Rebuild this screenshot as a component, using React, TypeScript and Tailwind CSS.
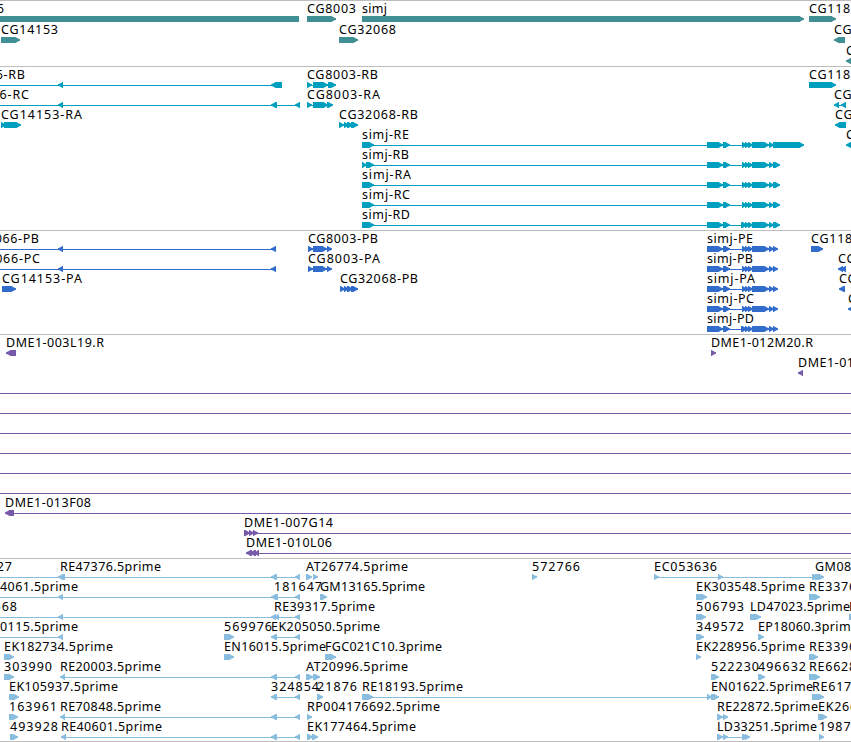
type Exon = [number, number];

interface Feature {
  name?: string;
  x: number;
  row: number;
  dir?: "fwd" | "rev";
  line?: Exon;
  exons?: Exon[];
}

interface TrackData {
  id: string;
  color: string;
  height: string;
  rowHeight: number;
  axis: number;
  features: Feature[];
}

// label advances in px, anything missing is 8
const ADVANCE: Record<string, number> = {
  A: 9, B: 7, D: 8, E: 7, F: 6, G: 9, L: 6, M: 10, N: 9, P: 7, T: 7,
  ".": 4, "-": 7, s: 6, i: 3, m: 12, j: 4, r: 5, e: 6,
};

function labelWidth(name: string) {
  return name.split("").reduce((sum, ch) => sum + (ADVANCE[ch] ?? 8), 0);
}

const SIMJ_MID: Exon[] = [[707, 723], [723, 730], [742, 747], [745, 750], [748, 753], [752, 769], [769, 774]];

const simjRna = (name: string, row: number): Feature => ({
  name,
  x: 362,
  row,
  line: [362, 773],
  exons: [
    ...(name === "simj-RB" ? ([[362, 367], [366, 374]] as Exon[]) : ([[362, 374]] as Exon[])),
    ...(name === "simj-RD" ? ([[741, 746]] as Exon[]) : []),
    ...SIMJ_MID,
    name === "simj-RE" ? [773, 804] : [773, 780],
  ],
});

const simjProtein = (name: string, row: number): Feature => ({
  name,
  x: 707,
  row,
  line: [707, 773],
  exons: [...(name === "simj-PD" ? ([[741, 746]] as Exon[]) : []), ...SIMJ_MID, [773, 778]],
});

const TRACKS: TrackData[] = [
  {
    id: "genes",
    color: "#3f8f95",
    height: "h-[66px]",
    rowHeight: 21,
    axis: 19,
    features: [
      { name: "CG12066", x: -53, row: 0, dir: "rev", exons: [[-60, 299]] },
      { name: "CG8003", x: 307, row: 0, exons: [[307, 336]] },
      { name: "simj", x: 362, row: 0, exons: [[362, 804]] },
      { name: "CG11811", x: 809, row: 0, exons: [[809, 836]] },
      { name: "CG14153", x: 1, row: 1, exons: [[1, 20]] },
      { name: "CG32068", x: 339, row: 1, exons: [[339, 358]] },
      { name: "CG6000", x: 834, row: 1, dir: "rev", exons: [[834, 845]] },
      { name: "CG6020", x: 846, row: 2, dir: "rev", exons: [[846, 870]] },
    ],
  },
  {
    id: "transcripts",
    color: "#009fbf",
    height: "h-[164px]",
    rowHeight: 20,
    axis: 19,
    features: [
      { name: "CG12066-RB", x: -54, row: 0, dir: "rev", line: [-5, 275], exons: [[58, 63], [271, 282]] },
      { name: "CG8003-RB", x: 307, row: 0, line: [307, 334], exons: [[307, 312], [313, 328], [328, 336]] },
      { name: "CG11811", x: 809, row: 0, exons: [[809, 836]] },
      { name: "CG12066-RC", x: -51, row: 1, dir: "rev", line: [-5, 298], exons: [[58, 63], [271, 277], [295, 300]] },
      { name: "CG8003-RA", x: 307, row: 1, line: [307, 330], exons: [[307, 312], [313, 328], [327, 333]] },
      { name: "CG6000", x: 834, row: 1, dir: "rev", line: [837, 844], exons: [[834, 839], [841, 846]] },
      { name: "CG14153-RA", x: 1, row: 2, line: [1, 17], exons: [[1, 6], [4, 21]] },
      { name: "CG32068-RB", x: 339, row: 2, line: [339, 355], exons: [[339, 344], [344, 349], [347, 353], [351, 358]] },
      { name: "CG6000", x: 835, row: 2, dir: "rev", exons: [[835, 846]] },
      simjRna("simj-RE", 3),
      { name: "CG6020", x: 846, row: 3, dir: "rev", exons: [[846, 870]] },
      simjRna("simj-RB", 4),
      simjRna("simj-RA", 5),
      simjRna("simj-RC", 6),
      simjRna("simj-RD", 7),
    ],
  },
  {
    id: "proteins",
    color: "#316ccc",
    height: "h-[104px]",
    rowHeight: 20,
    axis: 19,
    features: [
      { name: "CG12066-PB", x: -39, row: 0, dir: "rev", line: [-5, 273], exons: [[58, 63], [271, 276]] },
      { name: "CG8003-PB", x: 308, row: 0, line: [308, 329], exons: [[308, 313], [313, 327], [327, 332]] },
      simjProtein("simj-PE", 0),
      { name: "CG11811", x: 811, row: 0, exons: [[811, 823]] },
      { name: "CG12066-PC", x: -39, row: 1, dir: "rev", line: [-5, 273], exons: [[58, 63], [271, 276]] },
      { name: "CG8003-PA", x: 308, row: 1, line: [308, 329], exons: [[308, 313], [313, 327], [327, 332]] },
      simjProtein("simj-PB", 1),
      { name: "CG6000", x: 838, row: 1, dir: "rev", exons: [[838, 843], [841, 846]] },
      { name: "CG14153-PA", x: 2, row: 2, exons: [[2, 16]] },
      { name: "CG32068-PB", x: 340, row: 2, line: [340, 355], exons: [[340, 345], [344, 349], [347, 353], [351, 358]] },
      simjProtein("simj-PA", 2),
      { name: "CG6000", x: 839, row: 2, dir: "rev", exons: [[839, 845]] },
      simjProtein("simj-PC", 3),
      { name: "CG6020", x: 848, row: 3, dir: "rev", exons: [[848, 870]] },
      simjProtein("simj-PD", 4),
    ],
  },
  {
    id: "clones",
    color: "#7759a9",
    height: "h-[224px]",
    rowHeight: 20,
    axis: 19,
    features: [
      { name: "DME1-003L19.R", x: 6, row: 0, dir: "rev", exons: [[6, 16]] },
      { name: "DME1-012M20.R", x: 711, row: 0, exons: [[711, 716]] },
      { name: "DME1-013L02", x: 798, row: 1, dir: "rev", exons: [[798, 803]] },
      { x: 0, row: 2, line: [0, 851] },
      { x: 0, row: 3, line: [0, 851] },
      { x: 0, row: 4, line: [0, 851] },
      { x: 0, row: 5, line: [0, 851] },
      { x: 0, row: 6, line: [0, 851] },
      { x: 0, row: 7, line: [0, 851] },
      { name: "DME1-013F08", x: 5, row: 8, dir: "rev", line: [8, 851], exons: [[5, 14]] },
      { name: "DME1-007G14", x: 244, row: 9, line: [244, 851], exons: [[244, 250], [249, 254], [253, 258]] },
      { name: "DME1-010L06", x: 246, row: 10, dir: "rev", line: [248, 851], exons: [[246, 252], [250, 256], [254, 259]] },
    ],
  },
  {
    id: "ests",
    color: "#89bddf",
    height: "h-[183px]",
    rowHeight: 20,
    axis: 19,
    features: [
      { name: "572927", x: -36, row: 0 },
      { name: "RE47376.5prime", x: 60, row: 0, dir: "rev", line: [-5, 298], exons: [[58, 65], [271, 277], [295, 300]] },
      { name: "AT26774.5prime", x: 306, row: 0, exons: [[306, 312], [313, 318]] },
      { name: "572766", x: 532, row: 0, exons: [[532, 537]] },
      { name: "EC053636", x: 654, row: 0, line: [654, 820], exons: [[654, 659], [718, 723], [812, 818], [815, 824]] },
      { name: "GM08848", x: 815, row: 0 },
      { name: "RE14061.5prime", x: -23, row: 1, dir: "rev", line: [-5, 298], exons: [[58, 63], [271, 278], [295, 300]] },
      { name: "181647", x: 274, row: 1 },
      { name: "GM13165.5prime", x: 320, row: 1, exons: [[320, 327]] },
      { name: "EK303548.5prime", x: 696, row: 1, exons: [[696, 707]] },
      { name: "RE33760", x: 809, row: 1, exons: [[809, 820]] },
      { name: "570568", x: -31, row: 2, dir: "rev", line: [-5, 298], exons: [[58, 63], [271, 276], [274, 279], [295, 300]] },
      { name: "RE39317.5prime", x: 274, row: 2 },
      { name: "506793", x: 696, row: 2, exons: [[696, 706]] },
      { name: "LD47023.5prime", x: 750, row: 2, exons: [[750, 761]] },
      { name: "EK265", x: 849, row: 2, exons: [[849, 860]] },
      { name: "RE10115.5prime", x: -23, row: 3, dir: "rev", line: [-5, 61], exons: [[58, 63]] },
      { name: "569976", x: 224, row: 3, exons: [[224, 234]] },
      { name: "EK205050.5prime", x: 271, row: 3, dir: "rev", line: [272, 298], exons: [[271, 277], [295, 300]] },
      { name: "349572", x: 696, row: 3, exons: [[696, 704]] },
      { name: "EP18060.3prime", x: 758, row: 3, exons: [[758, 764]] },
      { name: "EK182734.5prime", x: 4, row: 4, exons: [[4, 14]] },
      { name: "EN16015.5prime", x: 224, row: 4, exons: [[224, 234]] },
      { name: "FGC021C10.3prime", x: 325, row: 4, exons: [[325, 336]] },
      { name: "EK228956.5prime", x: 696, row: 4, exons: [[696, 701]] },
      { name: "RE33960", x: 809, row: 4, exons: [[809, 818]] },
      { name: "303990", x: 4, row: 5, exons: [[4, 14]] },
      { name: "RE20003.5prime", x: 60, row: 5, dir: "rev", line: [61, 298], exons: [[60, 65], [271, 277], [295, 300]] },
      { name: "AT20996.5prime", x: 306, row: 5, exons: [[306, 313], [313, 320]] },
      { name: "522230", x: 711, row: 5, exons: [[711, 719]] },
      { name: "496632", x: 758, row: 5, exons: [[758, 765]] },
      { name: "RE66280", x: 809, row: 5, exons: [[809, 820]] },
      { name: "EK105937.5prime", x: 9, row: 6, exons: [[9, 19]] },
      { name: "324854", x: 271, row: 6, dir: "rev", line: [272, 298], exons: [[271, 277], [295, 300]] },
      { name: "21876", x: 317, row: 6, exons: [[317, 323]] },
      { name: "RE18193.5prime", x: 362, row: 6, line: [362, 713], exons: [[362, 373], [707, 712], [711, 719]] },
      { name: "EN01622.5prime", x: 711, row: 6 },
      { name: "RE61700", x: 812, row: 6, exons: [[812, 824]] },
      { name: "163961", x: 9, row: 7, exons: [[9, 18]] },
      { name: "RE70848.5prime", x: 60, row: 7, dir: "rev", line: [61, 298], exons: [[60, 65], [271, 277], [295, 300]] },
      { name: "RP004176692.5prime", x: 307, row: 7, exons: [[307, 312]] },
      { name: "RE22872.5prime", x: 717, row: 7, exons: [[717, 723], [723, 728]] },
      { name: "EK26653", x: 818, row: 7, exons: [[818, 827]] },
      { name: "493928", x: 10, row: 8, exons: [[10, 18]] },
      { name: "RE40601.5prime", x: 61, row: 8, dir: "rev", line: [62, 298], exons: [[61, 66], [271, 277], [295, 300]] },
      { name: "EK177464.5prime", x: 307, row: 8, exons: [[307, 313], [312, 318]] },
      { name: "LD33251.5prime", x: 717, row: 8, line: [723, 745], exons: [[717, 723], [723, 728], [742, 748], [745, 750]] },
      { name: "198721", x: 819, row: 8, exons: [[819, 824]] },
    ],
  },
];

// box with a stepped, blunt arrow head on the side the feature points to
function ExonShape({ span: [a, b], y, dir }: { span: Exon; y: number; dir: "fwd" | "rev" }) {
  const tip = dir === "fwd" ? b : a;
  const tail = dir === "fwd" ? a : b;
  const s = dir === "fwd" ? -1 : 1;
  const points = [
    [tail, y - 3],
    [tip + s * 4.5, y - 3],
    [tip + s * 2, y - 1.5],
    [tip, y - 0.7],
    [tip, y + 0.7],
    [tip + s * 2, y + 1.5],
    [tip + s * 4.5, y + 3],
    [tail, y + 3],
  ];
  return <polygon points={points.map((p) => p.join(",")).join(" ")} />;
}

function Track({ track }: { track: TrackData }) {
  const { color, rowHeight, axis } = track;
  return (
    <section className={`${track.height} shrink-0 overflow-hidden border-t border-[#bdbdbd]`}>
      <svg className="block h-full w-full">
        {track.features.map((f, i) => {
          const y = axis - 1 + f.row * rowHeight;
          return (
            <g key={i}>
              <g fill={color}>
                {f.line && (
                  <rect x={f.line[0]} y={y} width={f.line[1] - f.line[0]} height={1} shapeRendering="crispEdges" />
                )}
                {f.exons?.map((span, j) => (
                  <ExonShape key={j} span={span} y={y} dir={f.dir ?? "fwd"} />
                ))}
              </g>
              {f.name && (
                <text x={f.x} y={y - 6} textLength={labelWidth(f.name)} className="fill-black text-[12.5px]">
                  {f.name}
                </text>
              )}
            </g>
          );
        })}
      </svg>
    </section>
  );
}

export default function App() {
  return (
    <main className="flex h-[742px] w-[851px] flex-col overflow-hidden border-b border-[#bdbdbd] bg-white font-['Noto_Sans','Open_Sans',sans-serif]">
      {TRACKS.map((track) => (
        <Track key={track.id} track={track} />
      ))}
    </main>
  );
}
